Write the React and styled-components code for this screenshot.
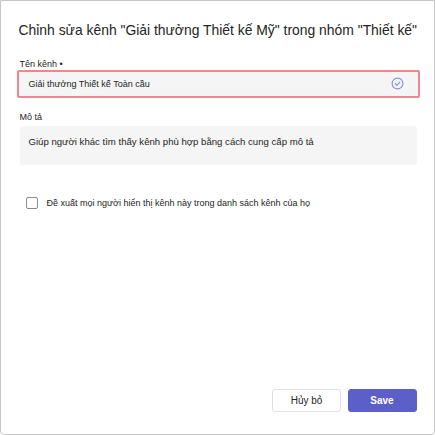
import React from 'react';
import styled, { createGlobalStyle } from 'styled-components';

const GlobalStyle = createGlobalStyle`
  html, body {
    margin: 0;
    padding: 0;
    background: #ffffff;
  }
  body {
    font-family: "Liberation Sans", "Noto Sans", Arial, sans-serif;
    color: #242424;
  }
`;

const App = () => {
  return (
    <>
      <GlobalStyle />
      <Dialog>
        <Title>Chỉnh sửa kênh "Giải thưởng Thiết kế Mỹ" trong nhóm "Thiết kế"</Title>
        <Field $gap={0}>
          <Label>Tên kênh •</Label>
          <InputBox $invalid>
            <InputText>Giải thưởng Thiết kế Toàn cầu</InputText>
            <CheckIcon />
          </InputBox>
        </Field>
        <Field $gap={3}>
          <Label>Mô tả</Label>
          <TextArea>Giúp người khác tìm thấy kênh phù hợp bằng cách cung cấp mô tả</TextArea>
        </Field>
        <CheckRow>
          <Box />
          <CheckLabel>Đề xuất mọi người hiển thị kênh này trong danh sách kênh của họ</CheckLabel>
        </CheckRow>
        <Footer>
          <Button>Hủy bỏ</Button>
          <Button $primary>Save</Button>
        </Footer>
      </Dialog>
    </>
  );
};

const CheckIcon = () => (
  <svg width="13" height="13" viewBox="0 0 13 13" fill="none">
    <circle cx="6.5" cy="6.5" r="5.4" stroke="#8a8fdb" strokeWidth="1.1" />
    <path d="M4.2 6.7 L5.9 8.3 L8.8 5.1" stroke="#8a8fdb" strokeWidth="1.1" strokeLinecap="round" strokeLinejoin="round" />
  </svg>
);

const Dialog = styled.div`
  box-sizing: border-box;
  width: 435px;
  height: 435px;
  border: 1.5px solid #c6c6c6;
  border-radius: 0 0 4px 4px;
  padding: 18.5px 17.5px 22.5px 18.5px;
  display: flex;
  flex-direction: column;
`;

const Title = styled.h1`
  margin: 0 0 19px -1px;
  font-size: 13.9px;
  font-weight: 400;
  line-height: 20px;
  color: #242424;
  white-space: nowrap;
`;

const Field = styled.div`
  display: flex;
  flex-direction: column;
  gap: ${({ $gap }) => $gap}px;
  margin-bottom: 14px;
`;

const Label = styled.div`
  font-size: 9px;
  line-height: 11px;
  color: #242424;
`;

const InputBox = styled.div`
  box-sizing: border-box;
  height: 28px;
  margin: 0 -3px;
  display: flex;
  align-items: center;
  justify-content: space-between;
  padding: 0 13.5px 0 10px;
  background: #f5f5f5;
  border: 2px solid ${({ $invalid }) => ($invalid ? '#f1878c' : 'transparent')};
  border-radius: 2px;
`;

const InputText = styled.span`
  font-size: 9px;
  color: #242424;
`;

const TextArea = styled.div`
  box-sizing: border-box;
  height: 39px;
  padding: 9px 9px;
  background: #f5f5f5;
  border-radius: 3px;
  font-size: 9.6px;
  line-height: 14px;
  color: #242424;
`;

const CheckRow = styled.div`
  display: flex;
  align-items: center;
  gap: 9px;
  margin: 18px 0 0 6px;
`;

const Box = styled.div`
  box-sizing: border-box;
  width: 12px;
  height: 12px;
  border: 1.3px solid #8a8a8a;
  border-radius: 2px;
`;

const CheckLabel = styled.span`
  font-size: 9px;
  color: #242424;
`;

const Footer = styled.div`
  margin-top: auto;
  display: flex;
  justify-content: flex-end;
  gap: 6.5px;
`;

const Button = styled.button`
  box-sizing: border-box;
  width: 69px;
  height: 23px;
  border-radius: 3px;
  font-family: "Liberation Sans", "Noto Sans", Arial, sans-serif;
  font-size: 10px;
  font-weight: ${({ $primary }) => ($primary ? 700 : 400)};
  color: ${({ $primary }) => ($primary ? '#ffffff' : '#242424')};
  background: ${({ $primary }) => ($primary ? '#5b5fc7' : '#ffffff')};
  border: 1px solid ${({ $primary }) => ($primary ? '#5b5fc7' : '#e0e0e0')};
  padding: 0;
`;

export default App;
